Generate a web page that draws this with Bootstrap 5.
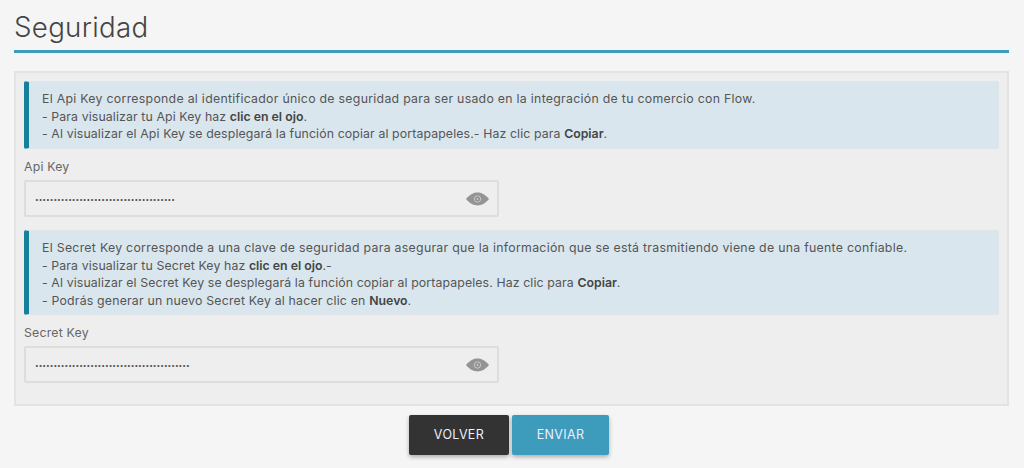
<!DOCTYPE html>
<html lang="es">
<head>
<meta charset="utf-8">
<title>Seguridad</title>
<link href="https://cdn.jsdelivr.net/npm/bootstrap@5.3.0/dist/css/bootstrap.min.css" rel="stylesheet">
<style>
html, body { height: 100%; }
body { background: #f5f5f5; color: #555; font-family: Inter, "Open Sans", sans-serif; font-size: 12.3px; line-height: 17.5px; letter-spacing: .29px; overflow: hidden; }
.page-wrap { padding: 11px 15px 0 14px; }
.sec-title { font-size: 27.7px; line-height: 33px; font-weight: 300; color: #444; margin: 0; padding-bottom: 6px; border-bottom: 3px solid #3d9bbb; letter-spacing: .3px; }
.sec-panel { margin-top: 18px; background: #eee; border: 2px solid #e3e3e3; padding: 8px 8px 21px; }
.sec-note { background: #d9e6ed; border: 1px solid #dfe6ea; border-left: 5px solid #17809b; border-radius: 2px; padding: 8px 13px 9px; margin: 0; color: #555; height: 68px; }
.sec-note.tall { height: 85px; }
.sec-note b { font-weight: 600; color: #444; letter-spacing: 0; }
.sec-line { display: block; letter-spacing: .12px; }
.sec-line.wider { letter-spacing: .2px; }
.sec-label { display: block; margin: 9px 0 4px; line-height: 18px; color: #666; letter-spacing: .2px; }
.sec-field { width: 475px; height: 37px; background: #eee; border: 2px solid #ddd; border-radius: 2px; padding: 0 8px 0 9px; margin-bottom: 13px; }
.sec-dots { color: #555; font-size: 6.56px; line-height: 1; letter-spacing: 0; padding-top: 4px; }
.sec-btn { height: 40px; border: 0; border-radius: 2px; color: #eef; font-size: 12.5px; letter-spacing: .35px; box-shadow: 0 2px 4px rgba(0,0,0,.3); padding: 0; }
.sec-back { width: 100px; background: #333; }
.sec-send { width: 97px; background: #3d9bbb; }
.sec-actions { gap: 3px; margin-top: 9px; padding-right: 5px; }
</style>
</head>
<body>
<div class="page-wrap">
  <h1 class="sec-title">Seguridad</h1>
  <div class="sec-panel">
    <div class="sec-note">El Api Key corresponde al identificador único de seguridad para ser usado en la integración de tu comercio con Flow.
      <span class="sec-line">- Para visualizar tu Api Key haz <b>clic en el ojo</b>.</span>
      <span class="sec-line">- Al visualizar el Api Key se desplegará la función copiar al portapapeles.- Haz clic para <b>Copiar</b>.</span></div>
    <label class="sec-label">Api Key</label>
    <div class="sec-field d-flex align-items-center justify-content-between">
      <span class="sec-dots">••••••••••••••••••••••••••••••••••••••</span>
      <svg width="23" height="14" viewBox="0 0 23 14"><path fill="#949494" d="M0 7C4 2.200 8 .6 11.500.6S19 2.200 23 7c-4 4.800-8 6.400-11.500 6.400S4 11.800 0 7z"/><circle cx="11.500" cy="7" r="3.200" fill="none" stroke="#c6c6c6" stroke-width="1"/><circle cx="11.500" cy="7" r="1" fill="#c6c6c6"/></svg>
    </div>
    <div class="sec-note tall">El Secret Key corresponde a una clave de seguridad para asegurar que la información que se está trasmitiendo viene de una fuente confiable.
      <span class="sec-line">- Para visualizar tu Secret Key haz <b>clic en el ojo</b>.-</span>
      <span class="sec-line">- Al visualizar el Secret Key se desplegará la función copiar al portapapeles. Haz clic para <b>Copiar</b>.</span>
      <span class="sec-line wider">- Podrás generar un nuevo Secret Key al hacer clic en <b>Nuevo</b>.</span></div>
    <label class="sec-label">Secret Key</label>
    <div class="sec-field d-flex align-items-center justify-content-between mb-0">
      <span class="sec-dots">••••••••••••••••••••••••••••••••••••••••••</span>
      <svg width="23" height="14" viewBox="0 0 23 14"><path fill="#949494" d="M0 7C4 2.200 8 .6 11.500.6S19 2.200 23 7c-4 4.800-8 6.400-11.500 6.400S4 11.800 0 7z"/><circle cx="11.500" cy="7" r="3.200" fill="none" stroke="#c6c6c6" stroke-width="1"/><circle cx="11.500" cy="7" r="1" fill="#c6c6c6"/></svg>
    </div>
  </div>
  <div class="sec-actions d-flex justify-content-center">
    <button type="button" class="btn sec-btn sec-back">VOLVER</button>
    <button type="button" class="btn sec-btn sec-send">ENVIAR</button>
  </div>
</div>
<script src="https://cdn.jsdelivr.net/npm/bootstrap@5.3.0/dist/js/bootstrap.bundle.min.js"></script>
</body>
</html>
